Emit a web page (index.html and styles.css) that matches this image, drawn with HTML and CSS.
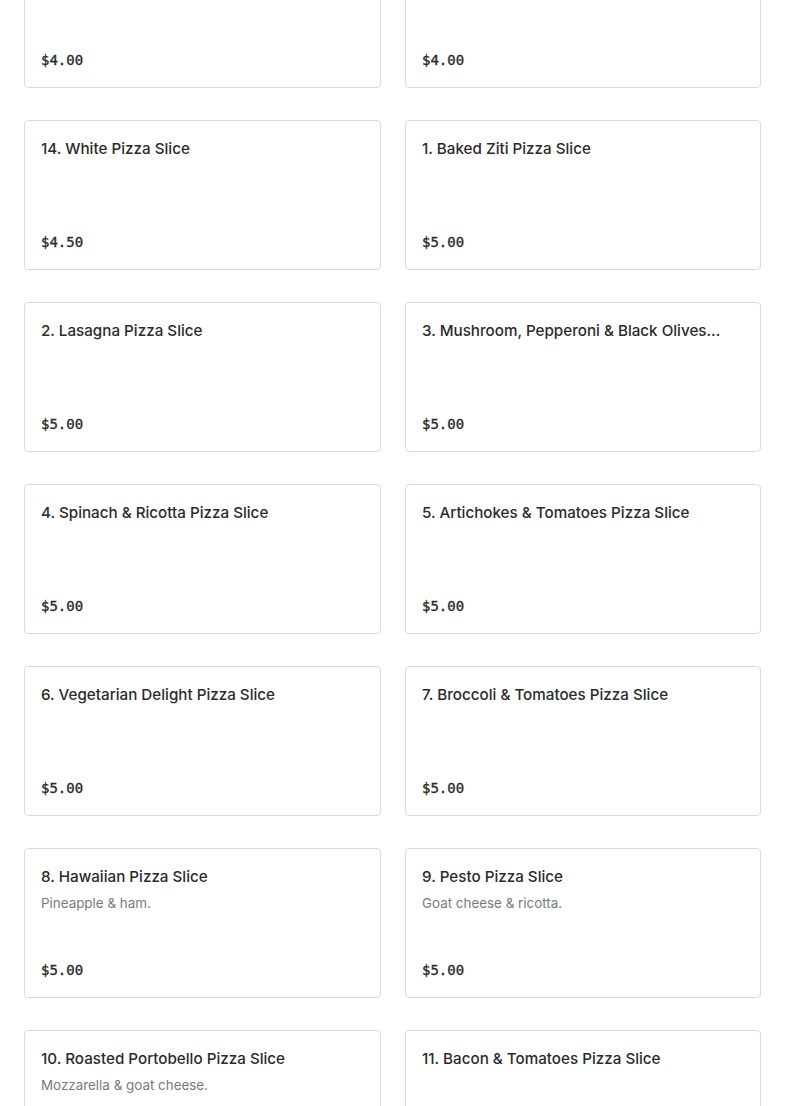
FILE: index.html
```html
<!DOCTYPE html>
<html lang="en">
<head>
<meta charset="utf-8">
<title>Menu</title>
<link rel="stylesheet" href="styles.css">
</head>
<body>
<main class="menu">
  <div class="grid">
    <div class="card"><h3 class="name">12. Cheese Pizza Slice</h3><div class="price">$4.00</div></div>
    <div class="card"><h3 class="name">13. Sicilian Pizza Slice</h3><div class="price">$4.00</div></div>
    <div class="card"><h3 class="name">14. White Pizza Slice</h3><div class="price">$4.50</div></div>
    <div class="card"><h3 class="name">1. Baked Ziti Pizza Slice</h3><div class="price">$5.00</div></div>
    <div class="card"><h3 class="name">2. Lasagna Pizza Slice</h3><div class="price">$5.00</div></div>
    <div class="card"><h3 class="name">3. Mushroom, Pepperoni &amp; Black Olives...</h3><div class="price">$5.00</div></div>
    <div class="card"><h3 class="name">4. Spinach &amp; Ricotta Pizza Slice</h3><div class="price">$5.00</div></div>
    <div class="card"><h3 class="name">5. Artichokes &amp; Tomatoes Pizza Slice</h3><div class="price">$5.00</div></div>
    <div class="card"><h3 class="name">6. Vegetarian Delight Pizza Slice</h3><div class="price">$5.00</div></div>
    <div class="card"><h3 class="name">7. Broccoli &amp; Tomatoes Pizza Slice</h3><div class="price">$5.00</div></div>
    <div class="card"><h3 class="name">8. Hawaiian Pizza Slice</h3><p class="desc">Pineapple &amp; ham.</p><div class="price">$5.00</div></div>
    <div class="card"><h3 class="name">9. Pesto Pizza Slice</h3><p class="desc">Goat cheese &amp; ricotta.</p><div class="price">$5.00</div></div>
    <div class="card"><h3 class="name">10. Roasted Portobello Pizza Slice</h3><p class="desc">Mozzarella &amp; goat cheese.</p><div class="price">$5.00</div></div>
    <div class="card"><h3 class="name">11. Bacon &amp; Tomatoes Pizza Slice</h3><div class="price">$5.00</div></div>
  </div>
</main>
</body>
</html>
```
FILE: styles.css
```css
html, body {
  margin: 0;
  padding: 0;
  background: #ffffff;
}
body {
  font-family: Inter, "Liberation Sans", sans-serif;
  color: #2b2b2b;
  overflow: hidden;
}
.menu {
  padding: 0 24px;
}
.grid {
  margin-top: -62px;
  display: grid;
  grid-template-columns: 357px 356px;
  column-gap: 24px;
  row-gap: 32px;
}
.card {
  box-sizing: border-box;
  height: 150px;
  border: 1px solid #dcdcdc;
  border-radius: 4px;
  padding: 16px 16px 15px;
  display: flex;
  flex-direction: column;
}
.name {
  margin: 0;
  font-size: 15.2px;
  line-height: 24px;
  font-weight: 500;
  color: #2b2b2b;
  white-space: nowrap;
  overflow: hidden;
}
.desc {
  margin: 4px 0 0;
  font-size: 13.4px;
  line-height: 20px;
  color: #7a7a7a;
}
.price {
  margin-top: auto;
  font-family: "DejaVu Sans Mono", "Liberation Mono", monospace;
  font-size: 14px;
  line-height: 24px;
  font-weight: 400;
  -webkit-text-stroke: 0.35px #2b2b2b;
  color: #2b2b2b;
}
```
